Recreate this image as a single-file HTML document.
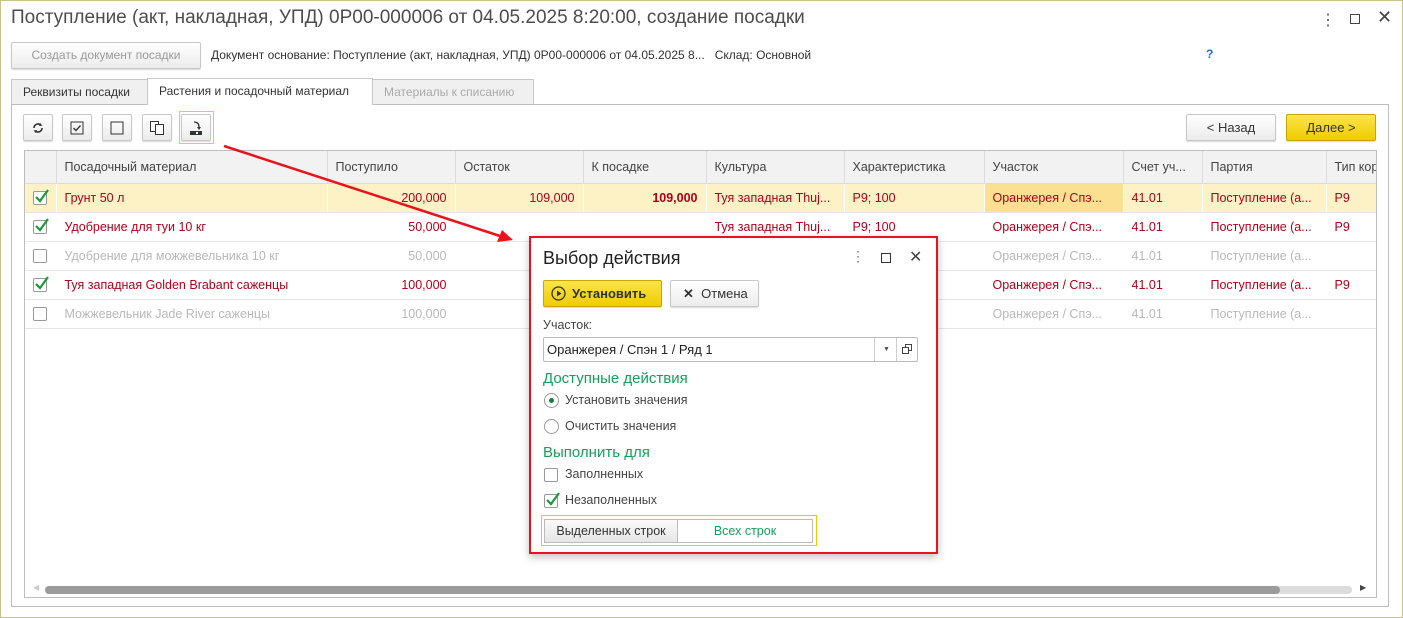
<!DOCTYPE html>
<html><head><meta charset="utf-8"><style>
*{box-sizing:border-box}
body{margin:0;width:1403px;height:618px;background:#fff;font-family:"Liberation Sans",Arial,sans-serif;font-size:12px;color:#333;position:relative;overflow:hidden}
.frame{position:absolute;left:0;top:0;width:1403px;height:618px;border:1px solid #c9c08a}
.abs{position:absolute}
.btn{position:absolute;border:1px solid #c8c8c8;border-radius:2px;background:linear-gradient(#fff,#ececec);box-shadow:0 1px 1px rgba(0,0,0,.15);text-align:center}
.tb{width:30px;height:27px;top:114px}
.tw{position:absolute;left:25px;top:151px;width:1351px;height:180px;overflow:hidden}
table{border-collapse:collapse;table-layout:fixed;width:1352px}
td{height:29px;padding:0 8px;white-space:nowrap;overflow:hidden;border-bottom:1px solid #e6e6e6;border-right:1px solid #fff;color:#b0001a;font-size:12.5px}
tr.h td{height:32px;background:#f2f2f2;color:#444;border-right:1px solid #dcdcdc;border-bottom:1px solid #dcdcdc}
tr.sel td{background:#fdf1c6}
tr.g td{color:#b8b8b8}
td.r{text-align:right}
.cb{display:inline-block;width:14px;height:14px;border:1px solid #999;border-radius:2px;background:#fff;position:relative;vertical-align:middle}
.cb svg{position:absolute;left:0;top:-4px}
</style></head><body>
<div class="frame"></div>
<div class="abs" style="left:11px;top:7px;font-size:19px;color:#4d4d4d">Поступление (акт, накладная, УПД) 0P00-000006 от 04.05.2025 8:20:00, создание посадки</div>
<div class="abs" style="left:1320px;top:10px;font-size:16px;color:#555">⋮</div>
<div class="abs" style="left:1350px;top:14px;width:10px;height:10px;border:1.5px solid #444"></div>
<div class="abs" style="left:1377px;top:7px;font-size:18px;color:#444">✕</div>

<div class="btn" style="left:11px;top:42px;width:190px;height:27px;line-height:25px;color:#999">Создать документ посадки</div>
<div class="abs" style="left:211px;top:48px;color:#333">Документ основание: Поступление (акт, накладная, УПД) 0P00-000006 от 04.05.2025 8...&nbsp;&nbsp; Склад: Основной</div>
<div class="abs" style="left:1206px;top:47px;color:#1a6fc9;font-weight:bold">?</div>

<div class="abs" style="left:11px;top:79px;width:137px;height:26px;background:#f0f0f0;border:1px solid #c8c8c8;line-height:24px;padding-left:11px">Реквизиты посадки</div>
<div class="abs" style="left:147px;top:78px;width:226px;height:27px;background:#fff;border:1px solid #c8c8c8;border-bottom:none;line-height:25px;padding-left:11px;z-index:2">Растения и посадочный материал</div>
<div class="abs" style="left:372px;top:79px;width:162px;height:26px;background:#f0f0f0;border:1px solid #c8c8c8;line-height:24px;padding-left:11px;color:#aaa">Материалы к списанию</div>
<div class="abs" style="left:11px;top:104px;width:1378px;height:503px;border:1px solid #bdbdbd"></div>

<div class="btn tb" style="left:23px"><svg width="14" height="14" viewBox="0 0 14 14" style="margin-top:6px"><path d="M3 7a4 4 0 0 1 7-2.6M11 7a4 4 0 0 1-7 2.6" fill="none" stroke="#333" stroke-width="1.6"/><path d="M9 2l2.5 2.5L8 5z M5 12L2.5 9.5 6 9z" fill="#333"/></svg></div>
<div class="btn tb" style="left:62px"><svg width="14" height="14" style="margin-top:6px"><rect x="1" y="1" width="12" height="12" fill="none" stroke="#333"/><path d="M3.5 7l2.5 2.5 4.5-5" fill="none" stroke="#333" stroke-width="1.4"/></svg></div>
<div class="btn tb" style="left:102px"><svg width="14" height="14" style="margin-top:6px"><rect x="1" y="1" width="12" height="12" fill="none" stroke="#333"/></svg></div>
<div class="btn tb" style="left:142px"><svg width="16" height="16" style="margin-top:5px"><rect x="1.5" y="1.5" width="8" height="10" fill="#fff" stroke="#333"/><rect x="6.5" y="4.5" width="8" height="10" fill="#fff" stroke="#333"/></svg></div>
<div class="abs" style="left:179px;top:111px;width:35px;height:33px;border:1px solid #e8c84a"></div>
<div class="btn tb" style="left:181px"><svg width="16" height="16" style="margin-top:5px"><path d="M6 2q5 0 5 5" fill="none" stroke="#333" stroke-width="1.3"/><path d="M9 7h4l-2 3z" fill="#333"/><rect x="2" y="11" width="12" height="4" fill="#333"/><rect x="8" y="12" width="2" height="2" fill="#fff"/></svg></div>

<div class="btn" style="left:1186px;top:114px;width:90px;height:27px;line-height:25px;font-size:13px">&lt; Назад</div>
<div class="btn" style="left:1286px;top:114px;width:90px;height:27px;line-height:25px;font-size:13px;background:linear-gradient(#fbe54a,#f0cc00);border-color:#c8a800">Далее &gt;</div>

<div class="abs" style="left:24px;top:150px;width:1353px;height:448px;border:1px solid #bdbdbd"></div>
<div class="tw"><table>
<colgroup><col style="width:31px"><col style="width:271px"><col style="width:128px"><col style="width:128px"><col style="width:123px"><col style="width:138px"><col style="width:140px"><col style="width:139px"><col style="width:79px"><col style="width:124px"><col style="width:51px"></colgroup>
<tr class="h"><td></td><td>Посадочный материал</td><td>Поступило</td><td>Остаток</td><td>К посадке</td><td>Культура</td><td>Характеристика</td><td>Участок</td><td>Счет уч...</td><td>Партия</td><td style="border-right:none">Тип кор</td></tr>
<tr class="sel"><td><span class="cb"><svg width="16" height="16"><path d="M2 9l4 4 8-11" fill="none" stroke="#1a9a3a" stroke-width="2.2"/></svg></span></td><td>Грунт 50 л</td><td class="r">200,000</td><td class="r">109,000</td><td class="r"><b>109,000</b></td><td>Туя западная Thuj...</td><td>P9; 100</td><td style="background:#fbe091">Оранжерея / Спэ...</td><td>41.01</td><td>Поступление (а...</td><td>P9</td></tr>
<tr><td><span class="cb"><svg width="16" height="16"><path d="M2 9l4 4 8-11" fill="none" stroke="#1a9a3a" stroke-width="2.2"/></svg></span></td><td>Удобрение для туи 10 кг</td><td class="r">50,000</td><td></td><td></td><td>Туя западная Thuj...</td><td>P9; 100</td><td>Оранжерея / Спэ...</td><td>41.01</td><td>Поступление (а...</td><td>P9</td></tr>
<tr class="g"><td><span class="cb"></span></td><td>Удобрение для можжевельника 10 кг</td><td class="r">50,000</td><td></td><td></td><td></td><td></td><td>Оранжерея / Спэ...</td><td>41.01</td><td>Поступление (а...</td><td></td></tr>
<tr><td><span class="cb"><svg width="16" height="16"><path d="M2 9l4 4 8-11" fill="none" stroke="#1a9a3a" stroke-width="2.2"/></svg></span></td><td>Туя западная Golden Brabant саженцы</td><td class="r">100,000</td><td></td><td></td><td></td><td></td><td>Оранжерея / Спэ...</td><td>41.01</td><td>Поступление (а...</td><td>P9</td></tr>
<tr class="g"><td><span class="cb"></span></td><td>Можжевельник Jade River саженцы</td><td class="r">100,000</td><td></td><td></td><td></td><td></td><td>Оранжерея / Спэ...</td><td>41.01</td><td>Поступление (а...</td><td></td></tr>
</table></div>
<div class="abs" style="left:45px;top:586px;width:1307px;height:8px;border-radius:4px;background:#dcdcdc"></div>
<div class="abs" style="left:45px;top:586px;width:1235px;height:8px;border-radius:4px;background:#9b9b9b"></div>
<div class="abs" style="left:33px;top:583px;font-size:8px;color:#ccc">◀</div>
<div class="abs" style="left:1360px;top:583px;font-size:8px;color:#444">▶</div>

<svg class="abs" style="left:0;top:0" width="1403" height="618"><line x1="224" y1="146" x2="500" y2="236" stroke="#e8141c" stroke-width="2.5"/><path d="M513 240l-16 2 5-12z" fill="#e8141c"/></svg>

<div class="abs" style="left:529px;top:236px;width:409px;height:318px;border:2px solid #e8141c;background:#fff;box-shadow:0 3px 8px rgba(0,0,0,.25)">
 <div class="abs" style="left:12px;top:10px;font-size:18px;color:#222">Выбор действия</div>
 <div class="abs" style="left:320px;top:10px;font-size:14px;color:#777">⋮</div>
 <div class="abs" style="left:350px;top:15px;width:10px;height:10px;border:1.5px solid #333"></div>
 <div class="abs" style="left:378px;top:9px;font-size:16px;color:#444">✕</div>
 <div class="btn" style="left:12px;top:42px;width:119px;height:27px;background:linear-gradient(#fbe54a,#f0cc00);border-color:#c8a800;line-height:25px;font-weight:bold;font-size:13px;text-align:left;padding-left:28px"><svg class="abs" style="left:7px;top:5px" width="15" height="15"><circle cx="7.5" cy="7.5" r="6.5" fill="none" stroke="#333" stroke-width="1.3"/><path d="M6 4.5v6l4.5-3z" fill="#333"/></svg>Установить</div>
 <div class="btn" style="left:139px;top:42px;width:89px;height:27px;line-height:25px;font-size:13px;text-align:left;padding-left:12px"><b style="font-size:13px">✕</b>&nbsp; Отмена</div>
 <div class="abs" style="left:12px;top:80px;color:#444;font-size:12.5px">Участок:</div>
 <div class="abs" style="left:12px;top:99px;width:375px;height:25px;border:1px solid #bbb;border-radius:2px;line-height:23px;padding-left:3px;font-size:13px;color:#222">Оранжерея / Спэн 1 / Ряд 1
  <div class="abs" style="left:330px;top:0;width:1px;height:23px;background:#ccc"></div><div class="abs" style="left:339px;top:0;font-size:7px;color:#555">▼</div>
  <div class="abs" style="left:352px;top:0;width:1px;height:23px;background:#ccc"></div><svg class="abs" style="left:358px;top:6px" width="10" height="10"><rect x="3.5" y="0.5" width="6" height="6" fill="none" stroke="#444"/><rect x="0.5" y="3.5" width="6" height="6" fill="#fff" stroke="#444"/></svg>
 </div>
 <div class="abs" style="left:12px;top:132px;font-size:15px;color:#14a05a">Доступные действия</div>
 <div class="abs" style="left:13px;top:155px;width:15px;height:15px;border:1px solid #999;border-radius:50%"><div style="margin:4px;width:5px;height:5px;border-radius:50%;background:#14803a"></div></div>
 <div class="abs" style="left:34px;top:155px;color:#444;font-size:12.5px">Установить значения</div>
 <div class="abs" style="left:13px;top:181px;width:15px;height:15px;border:1px solid #999;border-radius:50%"></div>
 <div class="abs" style="left:34px;top:181px;color:#444;font-size:12.5px">Очистить значения</div>
 <div class="abs" style="left:12px;top:206px;font-size:15px;color:#14a05a">Выполнить для</div>
 <div class="abs" style="left:13px;top:230px;width:14px;height:14px;border:1px solid #999;border-radius:2px"></div>
 <div class="abs" style="left:34px;top:229px;color:#444;font-size:12.5px">Заполненных</div>
 <div class="abs" style="left:13px;top:256px;width:14px;height:14px;border:1px solid #999;border-radius:2px"><svg class="abs" style="left:0;top:-4px" width="16" height="16"><path d="M2 9l4 4 8-11" fill="none" stroke="#1a9a3a" stroke-width="2.2"/></svg></div>
 <div class="abs" style="left:34px;top:255px;color:#444;font-size:12.5px">Незаполненных</div>
 <div class="abs" style="left:10px;top:277px;width:276px;height:31px;border:1px solid #f0c800"></div>
 <div class="abs" style="left:13px;top:281px;width:134px;height:24px;border:1px solid #bbb;background:linear-gradient(#fafafa,#e6e6e6);line-height:22px;text-align:center;color:#333;font-size:12.5px">Выделенных строк</div>
 <div class="abs" style="left:146px;top:281px;width:136px;height:24px;border:1px solid #bbb;background:#fff;line-height:22px;text-align:center;color:#14a05a;font-size:12.5px">Всех строк</div>
</div>
</body></html>
